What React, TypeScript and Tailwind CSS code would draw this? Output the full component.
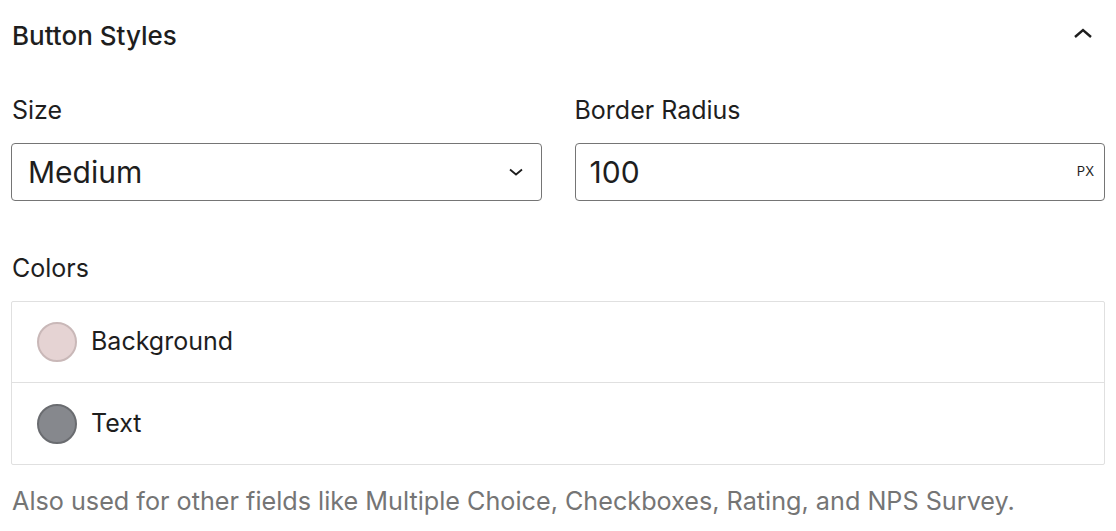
import React from 'react';

const ChevronUp = () => (
  <svg width="24" height="24" viewBox="0 0 24 24" fill="none" stroke="#1e1e1e" strokeWidth="2.4">
    <path d="M4 16l8-7 8 7" />
  </svg>
);

const ChevronDown = () => (
  <svg width="18" height="18" viewBox="0 0 18 18" fill="none" stroke="#1e1e1e" strokeWidth="1.8">
    <path d="M3 6.5l6 5 6-5" />
  </svg>
);

const ColorRow: React.FC<{ label: string; color: string; ring: string; last?: boolean }> = ({ label, color, ring, last }) => (
  <div className={`flex items-center h-[81px] px-[25px] gap-[14px] ${last ? '' : 'border-b border-[#e0e0e0]'}`}>
    <span className={`w-[40px] h-[40px] rounded-full border-2 ${ring}`} style={{ backgroundColor: color }} />
    <span className="text-[25px] text-[#1e1e1e]">{label}</span>
  </div>
);

export default function App() {
  return (
    <div className="w-[1116px] h-[531px] bg-white px-[11px] font-['Inter','Noto_Sans',sans-serif] text-[#1e1e1e]">
      {/* Panel header */}
      <div className="flex items-center justify-between h-[70px] pl-[1px]">
        <h2 className="text-[26px] font-medium">Button Styles</h2>
        <div className="mr-[10px] mb-[4px]">
          <ChevronUp />
        </div>
      </div>

      {/* Size + Border radius */}
      <div className="grid grid-cols-2 gap-[33px] mt-[24px]">
        <div>
          <label className="block text-[25px] leading-[32px] pl-[1px]">Size</label>
          <div className="mt-[17px] h-[58px] flex items-center justify-between border border-[#757575] rounded-[4px] pl-[16px] pr-[16px]">
            <span className="text-[30px]">Medium</span>
            <ChevronDown />
          </div>
        </div>
        <div>
          <label className="block text-[25px] leading-[32px]">Border Radius</label>
          <div className="mt-[17px] h-[58px] flex items-center justify-between border border-[#757575] rounded-[4px] pl-[14px] pr-[10px]">
            <span className="text-[30px]">100</span>
            <span className="text-[13px]">PX</span>
          </div>
        </div>
      </div>

      {/* Colors */}
      <div className="mt-[51px]">
        <label className="block text-[25px] leading-[32px] pl-[1px]">Colors</label>
        <div className="mt-[17px] border border-[#e0e0e0] rounded-[2px]">
          <ColorRow label="Background" color="#e5d3d3" ring="border-[#c9b8b8]" />
          <ColorRow label="Text" color="#86888d" ring="border-[#6a6c70]" last />
        </div>
      </div>

      <p className="mt-[21px] text-[25.2px] leading-[30px] text-[#757575] pl-[1px]">
        Also used for other fields like Multiple Choice, Checkboxes, Rating, and NPS Survey.
      </p>
    </div>
  );
}
